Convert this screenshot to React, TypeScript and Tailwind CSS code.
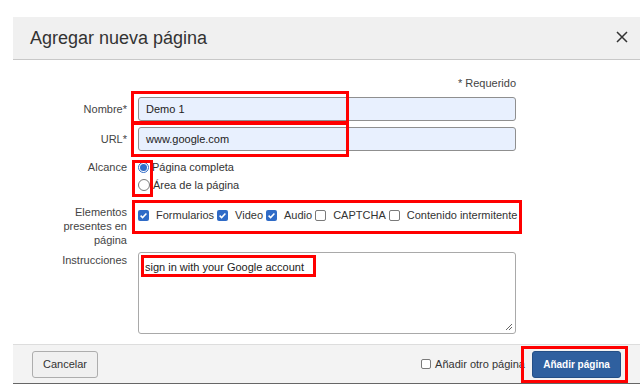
import React from 'react';

const font = { fontFamily: '"Liberation Sans", Arial, sans-serif' };

function Check({ checked }: { checked: boolean }) {
    return checked ? (
        <span className="inline-flex h-[11px] w-[11px] shrink-0 items-center justify-center rounded-[2px] bg-[#2f6bc7]">
            <svg width="9" height="9" viewBox="0 0 9 9">
                <path d="M1.6 4.6 L3.6 6.6 L7.4 2.4" fill="none" stroke="#fff" strokeWidth="1.5" />
            </svg>
        </span>
    ) : (
        <span className="inline-block h-[11px] w-[11px] shrink-0 rounded-[2px] border border-[#7a7a7a] bg-white" />
    );
}

function Radio({ checked }: { checked: boolean }) {
    return checked ? (
        <span className="inline-flex h-[11px] w-[11px] shrink-0 items-center justify-center rounded-full border border-[#2f6bc7] bg-white">
            <span className="h-[7px] w-[7px] rounded-full bg-[#2f6bc7]" />
        </span>
    ) : (
        <span className="inline-block h-[12px] w-[12px] shrink-0 rounded-full border border-[#7a7a7a] bg-white" />
    );
}

function Row({ label, children, className = '' }: { label: React.ReactNode; children: React.ReactNode; className?: string }) {
    return (
        <div className={`flex ${className}`}>
            <div className="w-[114px] shrink-0 text-right text-[11px] text-[#444]">{label}</div>
            <div className="ml-[11px] w-[378px]">{children}</div>
        </div>
    );
}

const elementos = [
    { label: 'Formularios', checked: true },
    { label: 'Video', checked: true },
    { label: 'Audio', checked: true },
    { label: 'CAPTCHA', checked: false },
    { label: 'Contenido intermitente', checked: false },
];

export default function App() {
    return (
        <div className="relative h-[387px] w-[640px] overflow-hidden bg-white" style={font}>
            <div className="ml-[13px] mt-[17px] w-[627px]">
                {/* Header */}
                <div className="flex h-[43px] items-center justify-between border-b border-[#c8c8c8] bg-[#f0f0f0] pl-[17px] pr-[12px]">
                    <h1 className="text-[18px] text-[#333]">Agregar nueva página</h1>
                    <svg width="12" height="12" viewBox="0 0 12 12" className="mb-[2px]">
                        <path d="M1 1 L11 11 M11 1 L1 11" stroke="#333" strokeWidth="1.5" />
                    </svg>
                </div>

                {/* Body */}
                <div className="pt-[16px]">
                    <div className="w-[503px] text-right text-[11px] leading-[14px] text-[#444]">* Requerido</div>

                    <Row label="Nombre*" className="mt-[7px] items-center">
                        <div className="flex h-[24px] items-center rounded-[3px] border border-[#8f8f8f] bg-[#e8f0fe] px-[7px] text-[11px] text-[#222]">
                            Demo 1
                        </div>
                    </Row>

                    <Row label="URL*" className="mt-[6px] items-center">
                        <div className="flex h-[24px] items-center rounded-[3px] border border-[#8f8f8f] bg-[#e8f0fe] px-[7px] text-[11px] text-[#222]">
                            www.google.com
                        </div>
                    </Row>

                    <Row label={<span className="leading-[18px]">Alcance</span>} className="mt-[7px]">
                        <div className="text-[11px] text-[#333]">
                            <div className="flex h-[18px] items-center gap-[3px]">
                                <Radio checked />
                                <span>Página completa</span>
                            </div>
                            <div className="flex h-[18px] items-center gap-[3px]">
                                <Radio checked={false} />
                                <span>Área de la página</span>
                            </div>
                        </div>
                    </Row>

                    <Row label={<div className="pl-[40px] leading-[14px]">Elementos presentes en página</div>} className="mt-[11px]">
                        <div className="flex h-[18px] items-center whitespace-nowrap pt-[2px] text-[11px] text-[#333]">
                            {elementos.map((e) => (
                                <div key={e.label} className="mr-[3px] flex shrink-0 items-center">
                                    <Check checked={e.checked} />
                                    <span className="ml-[7px]">{e.label}</span>
                                </div>
                            ))}
                        </div>
                    </Row>

                    <Row label={<span className="leading-[14px]">Instrucciones</span>} className="mt-[5px]">
                        <div className="relative h-[82px] rounded-[3px] border border-[#a9a9a9] bg-white px-[6px] pt-[6px] text-[11px] text-[#222]">
                            sign in with your Google account
                            <svg width="8" height="8" viewBox="0 0 8 8" className="absolute bottom-[2px] right-[2px]">
                                <path d="M7 1 L1 7 M7 4 L4 7" stroke="#666" strokeWidth="1" />
                            </svg>
                        </div>
                    </Row>
                </div>

                {/* Footer */}
                <div className="mt-[10px] flex h-[40px] items-center justify-between border-b border-t border-b-[#666] border-t-[#ddd] bg-[#f3f3f3] px-[19px]">
                    <button className="h-[27px] rounded-[3px] border border-[#adadad] bg-[#f0f0f0] px-[10px] text-[11px] text-[#333]">
                        Cancelar
                    </button>
                    <div className="flex items-center">
                        <span className="inline-block h-[10px] w-[10px] rounded-[2px] border border-[#7a7a7a] bg-white" />
                        <span className="ml-[4px] text-[11px] text-[#333]">Añadir otro página</span>
                        <button className="ml-[7px] h-[27px] w-[89px] rounded-[3px] border border-[#244f86] bg-[#2f609f] text-[10px] font-bold text-white">
                            Añadir página
                        </button>
                    </div>
                </div>
            </div>

            {/* Annotation boxes */}
            <div className="absolute left-[131px] top-[91px] h-[33px] w-[218px] border-[3px] border-[#ff0000]" />
            <div className="absolute left-[131px] top-[122px] h-[35px] w-[218px] border-[3px] border-[#ff0000]" />
            <div className="absolute left-[132px] top-[160px] h-[37px] w-[21px] border-[3px] border-[#ff0000]" />
            <div className="absolute left-[132px] top-[200px] h-[34px] w-[390px] border-[3px] border-[#ff0000]" />
            <div className="absolute left-[141px] top-[255px] h-[22px] w-[175px] border-[3px] border-[#ff0000]" />
            <div className="absolute left-[521px] top-[346px] h-[37px] w-[107px] border-[3px] border-[#ff0000]" />
        </div>
    );
}
